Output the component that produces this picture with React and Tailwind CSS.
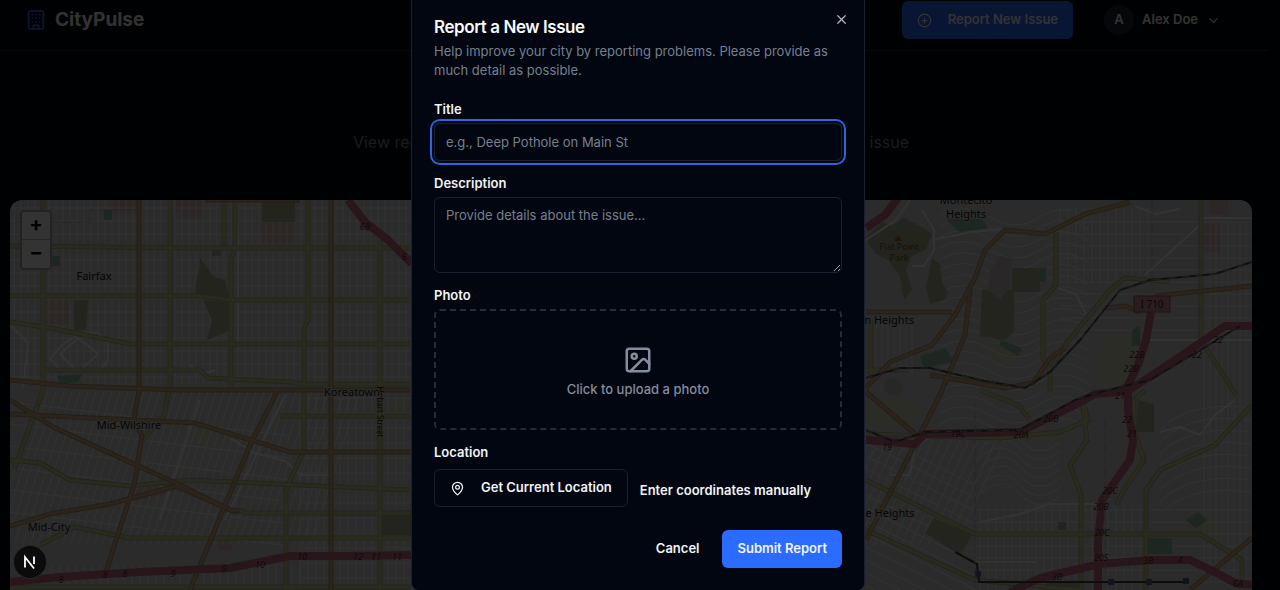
import { Building, PlusCircle, ChevronDown, X, Image as ImageIcon, MapPin } from "lucide-react";

const range = (from, to, step) => {
  const out = [];
  for (let v = from; v <= to; v += step) out.push(v);
  return out;
};

const MINOR = [
  ...range(14, 865, 7).map((x) => `M${x} 200V385`),
  ...range(300, 865, 8).map((x) => `M${x} 385V590`),
  ...range(208, 385, 13).map((y) => `M10 ${y}H865`),
  ...range(398, 590, 15).map((y) => `M300 ${y}H865`),
  ...range(20, 340, 8).map((x) => `M${x + 20} 392L${x - 30} 545`),
  ...range(20, 300, 8).map((x) => `M${x} 565V590`),
  ...range(410, 540, 22).map((y) => `M10 ${y - 8}L290 ${y + 26}`),
].join("");

const MINOR_EAST = [
  ...range(870, 915, 6).map((x) => `M${x} 320V375`),
  ...range(1060, 1150, 8).map((x) => `M${x} 208V285`),
  ...range(1204, 1250, 6).map((x) => `M${x} 222V580`),
  ...range(980, 1150, 8).map((x) => `M${x} 505V590`),
  ...range(870, 1010, 9).map((x) => `M${x} 440L${x - 50} 545`),
  ...range(430, 590, 13).map((y) => `M866 ${y}L975 ${y + 55}`),
  ...range(215, 430, 11).map((y) => `M940 ${y}q25 -14 50 2t50 0t50 3`),
  ...range(440, 500, 9).map((y) => `M980 ${y}q22 -20 40 0t40 2`),
  ...range(410, 500, 12).map((y) => `M1160 ${y + 20}q30 -30 90 -22`),
  ...range(222, 330, 12).map((y) => `M1060 ${y}H1252`),
  ...range(510, 590, 12).map((y) => `M975 ${y}H1252`),
].join("");

const PARKS = [
  "M262 200h33v22h-33z",
  "M200 258c10 14 12 20 25 22l5 20-34-5c-2-14 4-20 4-37z",
  "M203 300l28 2v28l-24 10 5-20z",
  "M74 300h14l-2 30h-12z",
  "M382 512l34-3v26h-36z",
  "M868 236l14-14 10 4 12-8 16 8 12 8-6 16-14 6-6 14 6 20-8 10-4-24-12-16-12-6-8-10z",
  "M932 258l8 6 2 18 6 10-4 8-14 4-4-16z",
  "M982 290h32v42l-10 8-24-4z",
  "M1012 268h28v24h-28z",
  "M934 518l38 17-12 20-35-22z",
  "M1138 400l16 4v28h-18z",
  "M1048 582h34v8h-40z",
];

const LEISURE = [
  "M104 210h8v10h-8z",
  "M212 250h9v6h-9z",
  "M52 256h8v10h-8z",
  "M57 376l25-2-4 8-18 2z",
  "M946 220l30-10 12 18-28 4z",
  "M920 356l26-8 8 14-30 6z",
  "M1000 340l22 8-4 8-18-10z",
  "M1148 538h24v16h-24z",
  "M1186 520l12-8 10 8-12 8z",
  "M1058 522h8v8h-8z",
  "M1132 330l8-4v20h-8z",
  "M1040 268h6v14h-6z",
];

const YELLOW =
  "M43 200V390L14 470M170 200V385L164 415L143 440M235 200V250L231 258V390M308 200V320L304 328V450L286 490V590M224 200V246M380 240V590M10 246L190 248H410M10 296H200L230 300H410M10 322L50 328L130 344H410M45 370H200L208 378L290 382L300 384H410M10 460L40 463L70 480L130 486L190 480L410 490M240 510L245 513H410M280 416H410M40 545L75 527L130 538H410M10 587H410M1056 232V285L1043 300V358L1050 370V392M1201 200V340L1236 395M871 320V378M866 370H908M866 480L975 534H1200L1242 560V590M866 530L975 580L1080 590M1081 500V590M1145 390L1134 400V430L1144 460L1118 500V506M1146 590V490L1160 470L1215 445L1252 405M980 390L1018 405L1030 420M866 434L1000 438L1060 432L1088 420L1083 400M1082 400L1087 440L1070 465L1081 495V505M1170 282L1125 278L1110 290L1065 345L1050 370";

const ORANGE =
  "M139 200V390L134 420L142 436L134 485L105 575M331 200V590M10 380L70 386L180 390H410M10 400L55 428L180 485L230 510L240 511M10 414L195 423L290 452H410M10 526L50 514L110 504L176 486L235 512M278 390L250 445L190 590M205 200H300M866 392L920 438M866 312H952M866 388L890 362L932 345L955 315L975 278L985 250L1005 230L1045 234L1085 214L1130 202M970 290L965 335L940 395L866 540M930 375L1005 388L1033 383L1050 358L1065 348M1105 308L1125 306L1140 312M1155 296L1252 286M1252 538L1190 590";

const MOTORWAY =
  "M348 200L365 222L388 240L412 264M10 582L60 577L140 572L230 568L290 556L345 556L412 555M866 228L885 215L898 198M866 440L915 444L925 434L1020 432L1075 405L1095 394L1128 391L1175 360L1225 326L1252 326M1151 312L1146 340L1138 365L1128 385V410L1133 440L1130 460L1102 500L1098 540V590M1010 592L1040 578L1100 564L1150 560H1190L1215 572L1235 583L1252 585";

const RAIL =
  "M866 378L900 368L930 368L980 380L1025 388L1050 372L1080 340L1120 290L1150 280L1215 274L1252 262M866 430L895 442L925 432L1020 430L1075 400L1100 392L1150 380L1240 326";

const EXITS = [
  [365, 230, "6B"], [404, 260, "6"], [61, 583, "8"], [105, 578, "8"], [125, 577, "8"], [173, 577, "9"],
  [224, 572, "9"], [260, 568, "10"], [302, 560, "10"], [358, 560, "12"], [376, 560, "11"], [397, 560, "11"],
  [887, 450, "19"], [958, 437, "19C"], [1021, 438, "20A"], [1051, 422, "20B"], [1120, 399, "21"], [1127, 423, "22"],
  [1132, 437, "21"], [1110, 494, "20C"], [1101, 510, "20B"], [1102, 536, "20C"], [1101, 561, "20S"], [1057, 580, "3B"],
  [1148, 564, "3B"], [1180, 563, "4"], [1137, 358, "22B"], [1131, 372, "22B"], [1218, 343, "22"], [1197, 358, "22"], [1238, 587, "6A"],
];

const PLACES = [
  [94, 280, "Fairfax"], [352, 396, "Koreatown"], [129, 429, "Mid-Wilshire"], [49, 531, "Mid-City"],
  [966, 204, "Montecito"], [966, 218, "Heights"], [874, 324, "Lincoln Heights"], [879, 517, "Boyle Heights"],
];

function CityMap() {
  return (
    <svg viewBox="10 200 1242 390" preserveAspectRatio="xMidYMin slice" className="block h-full w-full" role="img" aria-label="Map of reported issues">
      <path fill="#d8d7d4" d="M10 200h1242v390H10z" />
      <g fill="#dcbdb9">
        <path d="M110 200h28v14h-28zM175 200h28v18h-28zM262 223h33v20h-33zM46 300h23v26H46zM218 540h14v10h-14zM1203 222h17v30h-17zM1210 200h18v15h-18z" />
        <path d="M130 490l50-8 8 6-52 14z" />
      </g>
      <path fill="#d8d9ba" d="M195 430h14v14h-14zM180 374h8v16h-8zM174 212h8v8h-8zM228 522l14 4-2 8-14-4zM391 398h16v16h-16zM866 400l30-5 25 15-10 18-45-5zM1110 330l30-4-4 40-12 20-28-4 6-30zM1000 340l-14 8 12 14 24-2zM1180 515l30-2 15 18-30 8z" />
      <g fill="none" stroke="#ffffff" strokeWidth="1" opacity="0.8">
        <path d={MINOR} />
        <path d={MINOR_EAST} />
      </g>
      <g fill="#adb592">{PARKS.map((d) => <path key={d} d={d} />)}</g>
      <g fill="#8fbfa0">{LEISURE.map((d) => <path key={d} d={d} />)}</g>
      <path fill="#ccc4c8" d="M990 272l10-16 12 2-2 28-10 14-12-10z" />
      <ellipse cx="893" cy="387" rx="9" ry="8" fill="#c3c1bd" />
      <g fill="none" stroke="#ffffff" strokeWidth="2">
        <path d="M62 345l18-12 18 0 10 10v18l-10 10H62l-12-12zM78 338l20 16-20 18-18-18zM238 226V350M190 365q10 12 25 5M10 325l18 18-5 45M200 400L160 520M230 438l25 15 30 8 15 14h30M285 395L225 520" />
        <path d="M866 240l30-20 14-20M932 240l40-8 30-3M912 266h12l10-16v-20l-12-20M1145 275l55-50M1203 218H1252M1058 288l18 6 10 20M890 475h20l5-28 15-10M980 522l40-8 30-10h50M1160 432l20-5 20 8 15-20 20-15M975 562h60M1145 340h107M1135 206l20 8 25-5" />
      </g>
      <path fill="none" stroke="#aeae88" strokeWidth="5" d={YELLOW} />
      <path fill="none" stroke="#d3d69c" strokeWidth="3" d={YELLOW} />
      <path fill="none" stroke="#b0926e" strokeWidth="5" d={ORANGE} />
      <path fill="none" stroke="#d8b28c" strokeWidth="3" d={ORANGE} />
      <path fill="none" stroke="#c96f82" strokeWidth="8" strokeLinejoin="round" d={MOTORWAY} />
      <path fill="none" stroke="#4b4b4b" strokeWidth="2" d={RAIL} />
      <path fill="none" stroke="#aaa" strokeWidth="1" strokeDasharray="7 7" d={RAIL} />
      <path fill="none" stroke="#444" strokeWidth="2" d="M955 552l22 12 2 18h210" />
      <path fill="#5c6695" d="M975 571h6v6h-6zM1108 579h6v6h-6zM1146 579h6v6h-6zM1183 578h6v6h-6z" />
      <path fill="none" stroke="#b7aec0" strokeDasharray="8 4" d="M15 222h75v-12h50M975 400v190M1152 200v100M1105 420v150" />
      <g className="font-['Noto_Sans',sans-serif]" textAnchor="middle">
        <g fill="#5c2833" fontSize="9" fontStyle="italic">
          {EXITS.map(([x, y, label]) => <text key={`${x}-${y}`} x={x} y={y}>{label}</text>)}
        </g>
        <path fill="#d08f9c" stroke="#9e5565" d="M1134 296h36v16h-36z" />
        <text x="1152" y="308" fontSize="10" fill="#402024">I 710</text>
        <text x="377" y="412" transform="rotate(90 377 412)" fill="#222" fontSize="8">Hobart Street</text>
        <g fill="#1c1c1c" stroke="#d8d7d4" strokeWidth="2" paintOrder="stroke" fontSize="11">
          {PLACES.map(([x, y, label]) => <text key={`${label}-${y}`} x={x} y={y}>{label}</text>)}
        </g>
        <path fill="#a96a22" d="M898 235l4 6h-8z" />
        <g fill="#655936" fontSize="9">
          <text x="899" y="250">Flat Point</text>
          <text x="899" y="261">Park</text>
        </g>
      </g>
    </svg>
  );
}

function Header() {
  return (
    <header className="mr-3 flex h-[51px] items-start justify-between border-b border-[#2b2f3c] pr-8 pl-[25px]">
      <a href="#home" className="flex h-10 items-center gap-2 text-[#fafafa]">
        <Building className="h-[22px] w-[22px] text-[#2b6bff]" strokeWidth={2} aria-hidden="true" />
        <span className="text-[19px] font-bold">CityPulse</span>
      </a>
      <div className="flex items-center gap-4 pt-px">
        <button type="button" className="flex h-[38px] items-center gap-4 rounded-md bg-[#2b6bff] px-[15px] text-[13px] font-semibold text-[#fafafa]">
          <PlusCircle className="h-[15px] w-[15px]" aria-hidden="true" />
          Report New Issue
        </button>
        <button type="button" className="flex h-[38px] items-center gap-2 px-[15px] text-[13px] font-semibold text-[#fafafa]">
          <span className="flex h-[30px] w-[30px] items-center justify-center rounded-full bg-[#1f2532]">A</span>
          Alex Doe
          <ChevronDown className="h-[15px] w-[15px]" aria-hidden="true" />
        </button>
      </div>
    </header>
  );
}

function ReportDialog() {
  return (
    <div className="fixed inset-0 flex items-start justify-center overflow-hidden bg-black/80 pr-1">
      <section role="dialog" aria-modal="true" aria-labelledby="report-title" className="relative -mt-2 w-full max-w-[454px] rounded-lg border border-[#1b2130] bg-[#020611] px-[22px] pt-[23px] pb-[22px]">
        <button type="button" aria-label="Close" className="absolute top-[19px] right-[15px] text-[#b3b5ba]">
          <X className="h-[15px] w-[15px]" />
        </button>
        <h2 id="report-title" className="text-[17px] leading-[22px] font-semibold tracking-tight text-[#f8fafc]">Report a New Issue</h2>
        <p className="mt-1 text-[13px] leading-[19px] text-[#75808f]">
          Help improve your city by reporting problems. Please provide as much detail as possible.
        </p>
        <form className="mt-[19px] text-[13px] text-[#f1f3f6]" onSubmit={(e) => e.preventDefault()}>
          <label htmlFor="title" className="block leading-5 font-semibold">Title</label>
          <input id="title" type="text" placeholder="e.g., Deep Pothole on Main St" className="mt-1 block h-[38px] w-full rounded-md border border-[#1b2130] bg-transparent px-[11px] ring-2 ring-[#2b66dc] ring-offset-2 ring-offset-[#020611] outline-none placeholder:text-[#75808f]" />
          <label htmlFor="description" className="mt-3 block leading-5 font-semibold">Description</label>
          <textarea id="description" placeholder="Provide details about the issue..." className="mt-1 block h-[76px] w-full resize-y rounded-md border border-[#1b2130] bg-transparent px-[11px] py-2 leading-[19px] placeholder:text-[#75808f]" />
          <label htmlFor="photo" className="mt-3 block leading-5 font-semibold">Photo</label>
          <label htmlFor="photo" className="mt-1 flex h-[121px] flex-col items-center justify-center gap-1 rounded-md border-2 border-dashed border-[#252b38] pt-1 text-[#838d9d]">
            <ImageIcon className="h-[30px] w-[30px]" aria-hidden="true" />
            <span className="leading-5 font-medium">Click to upload a photo</span>
          </label>
          <input id="photo" type="file" accept="image/*" className="sr-only" />
          <p className="mt-3 leading-5 font-semibold">Location</p>
          <div className="mt-[7px] flex items-center gap-3 font-semibold">
            <button type="button" className="flex h-[38px] items-center gap-4 rounded-md border border-[#1b2130] px-[15px]">
              <MapPin className="h-[15px] w-[15px]" aria-hidden="true" />
              Get Current Location
            </button>
            <button type="button" className="pt-1.5">Enter coordinates manually</button>
          </div>
          <div className="mt-[23px] flex justify-end gap-2 font-semibold">
            <button type="button" className="h-[38px] px-[15px]">Cancel</button>
            <button type="submit" className="h-[38px] rounded-md bg-[#2b6bff] px-[15px]">Submit Report</button>
          </div>
        </form>
      </section>
    </div>
  );
}

export default function App() {
  return (
    <div className="flex h-screen flex-col overflow-hidden bg-[#020611] font-['Inter',sans-serif]">
      <Header />
      <main className="flex min-h-0 flex-1 flex-col pr-7 pl-[10px]">
        <p className="pt-[79px] pb-[46px] text-center text-base leading-6 text-[#7c8798]">
          View recently reported issues, filter by category, or report your own issue
        </p>
        <div className="relative min-h-0 flex-1 overflow-hidden rounded-t-xl">
          <CityMap />
          <div className="absolute top-[10px] left-[10px] flex w-8 flex-col rounded-sm border-2 border-[#aaa] bg-white text-xl leading-6 font-bold text-black">
            <button type="button" aria-label="Zoom in" className="h-7 border-b border-[#bbb] pb-1">+</button>
            <button type="button" aria-label="Zoom out" className="h-7 pb-1">−</button>
          </div>
        </div>
      </main>
      <ReportDialog />
      <button type="button" aria-label="Developer tools" className="fixed bottom-3 left-[14px] flex h-8 w-8 items-center justify-center rounded-full bg-[#0b0b0b] text-white ring-1 ring-[#292929]">
        <svg viewBox="0 0 16 16" className="h-4 w-4" fill="none" stroke="currentColor" strokeWidth="1.8" aria-hidden="true">
          <path d="M3 13.5V3l9 11.5M12 2.5v7.5" />
        </svg>
      </button>
    </div>
  );
}
